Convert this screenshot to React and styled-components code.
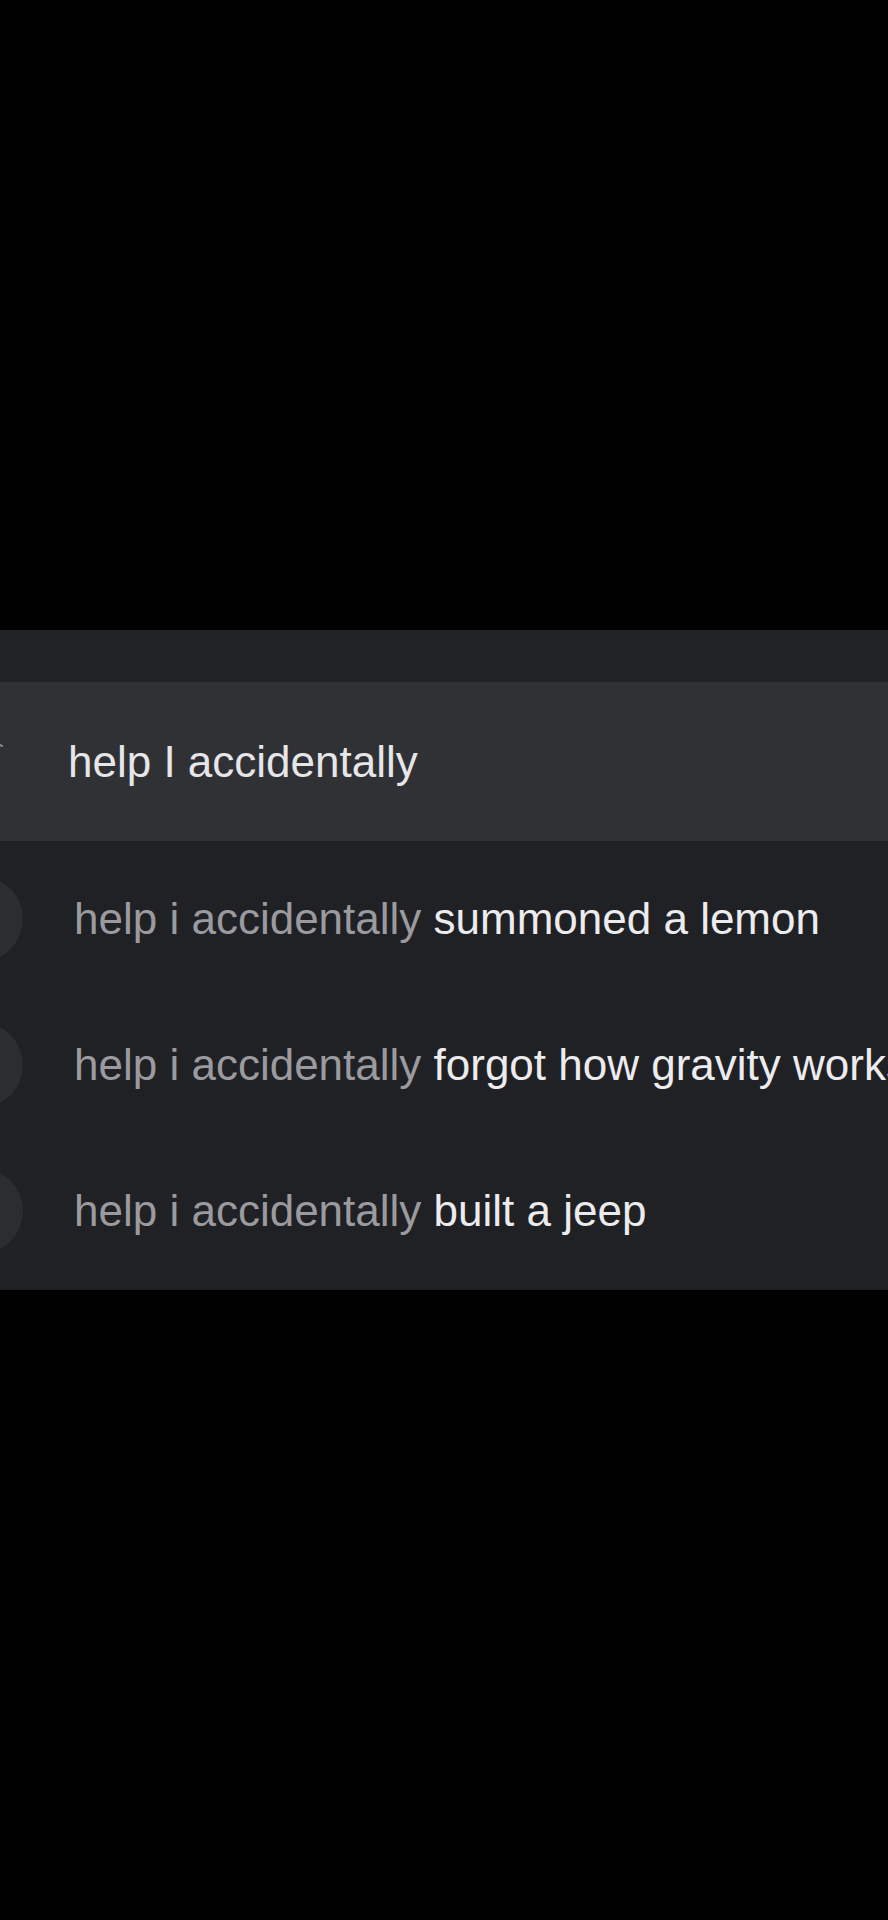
import React from "react";
import styled, { createGlobalStyle } from "styled-components";

const GlobalStyle = createGlobalStyle`
  html, body {
    margin: 0;
    padding: 0;
    background: #000;
  }
  body {
    font-family: "Liberation Sans", Arial, Helvetica, sans-serif;
    overflow: hidden;
  }
`;

const Screen = styled.div`
  width: 888px;
  height: 1920px;
  background: #000;
  padding-top: 630px;
  box-sizing: border-box;
  overflow: hidden;
`;

const Panel = styled.div`
  background: #202125;
  display: flex;
  flex-direction: column;
`;

const TopBar = styled.div`
  height: 52px;
  background: #222327;
`;

const SearchRow = styled.div`
  height: 159px;
  background: #303135;
  display: flex;
  align-items: center;
  padding-left: 68px;
  position: relative;
`;

const EdgeIcon = styled.svg`
  position: absolute;
  left: -10px;
  top: 56px;
`;

const Query = styled.span`
  font-size: 44px;
  line-height: 1;
  color: #e6e6e8;
  white-space: nowrap;
`;

const List = styled.div`
  padding: 5px 0 6px;
  display: flex;
  flex-direction: column;
`;

const Row = styled.div`
  height: 146px;
  display: flex;
  align-items: center;
  gap: 51px;
`;

const Bubble = styled.div`
  flex: none;
  width: 86px;
  height: 86px;
  margin-left: -63px;
  border-radius: 50%;
  background: #2c2d31;
`;

const Text = styled.div`
  font-size: 44px;
  line-height: 1;
  white-space: nowrap;
`;

const Prefix = styled.span`
  color: #9b9b9f;
`;

const Completion = styled.span`
  color: #ececee;
`;

const suggestions = [
  "summoned a lemon",
  "forgot how gravity works",
  "built a jeep",
];

export default function App() {
  return (
    <>
      <GlobalStyle />
      <Screen>
        <Panel>
          <TopBar />
          <SearchRow>
            <EdgeIcon width="14" height="14" viewBox="0 0 14 14">
              <path d="M2 2 L12 8" stroke="#8d8d92" strokeWidth="2" strokeLinecap="round" fill="none" />
            </EdgeIcon>
            <Query>help I accidentally</Query>
          </SearchRow>
          <List>
            {suggestions.map((s) => (
              <Row key={s}>
                <Bubble />
                <Text>
                  <Prefix>help i accidentally </Prefix>
                  <Completion>{s}</Completion>
                </Text>
              </Row>
            ))}
          </List>
        </Panel>
      </Screen>
    </>
  );
}
